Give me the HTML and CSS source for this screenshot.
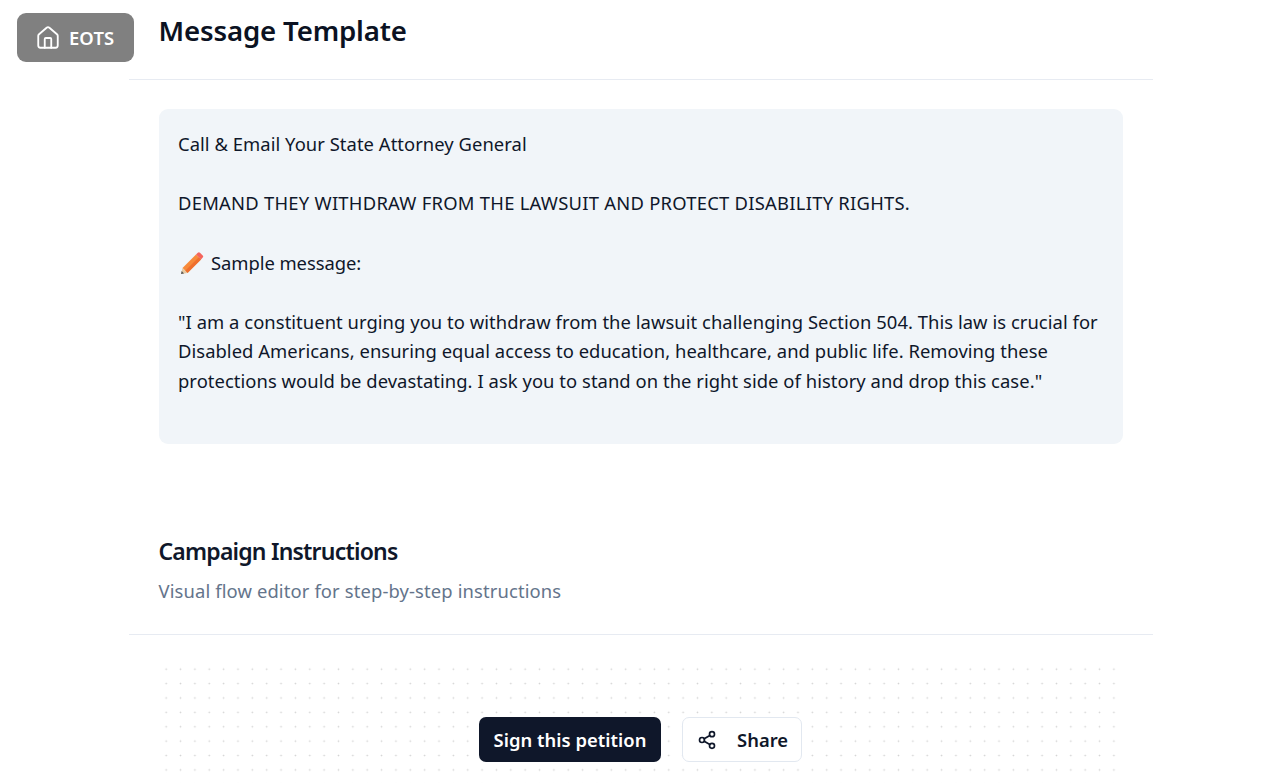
FILE: index.html
```html
<!DOCTYPE html>
<html lang="en">
<head>
<meta charset="utf-8">
<title>Message Template</title>
<link rel="stylesheet" href="styles.css">
</head>
<body>
<a class="home" href="#">
  <svg class="home-icon" viewBox="0 0 24 24" fill="none" stroke="currentColor" stroke-width="1.7" stroke-linecap="round" stroke-linejoin="round"><path d="M15 21v-8a1 1 0 0 0-1-1h-4a1 1 0 0 0-1 1v8"/><path d="M3 10a2 2 0 0 1 .709-1.528l7-5.999a2 2 0 0 1 2.582 0l7 5.999A2 2 0 0 1 21 10v9a2 2 0 0 1-2 2H5a2 2 0 0 1-2-2z"/></svg>
  <span>EOTS</span>
</a>
<main class="page">
  <header class="head">
    <h1 class="title">Message Template</h1>
  </header>
  <section class="body">
    <div class="card">
      <p>Call &amp; Email Your State Attorney General</p>
      <p class="caps">DEMAND THEY WITHDRAW FROM THE LAWSUIT AND PROTECT DISABILITY RIGHTS.</p>
      <p class="sample"><svg class="pencil" viewBox="0 0 24 24"><path d="M2.500 17 16 3.500l5 5L7.500 22z" fill="#f78a3b"/><path d="M7.500 22 21 8.500 18.800 6.300 5 20z" fill="#ef6f2e"/><path d="M16 3.500l1.800-1.800a1.600 1.600 0 0 1 2.200 0l2.700 2.700a1.600 1.600 0 0 1 0 2.200L21 8.500z" fill="#f4645c"/><path d="M2.500 17 1 23l6.500-1z" fill="#e8c9a0"/><path d="M1.700 20 1 23l3-.5z" fill="#555"/></svg>Sample message:</p>
      <p>"I am a constituent urging you to withdraw from the lawsuit challenging Section 504. This law is crucial for Disabled Americans, ensuring equal access to education, healthcare, and public life. Removing these protections would be devastating. I ask you to stand on the right side of history and drop this case."</p>
    </div>
  </section>
  <header class="head2">
    <h2 class="subtitle">Campaign Instructions</h2>
    <p class="desc">Visual flow editor for step-by-step instructions</p>
  </header>
  <section class="canvas">
    <div class="actions">
      <button class="btn primary">Sign this petition</button>
      <button class="btn outline">
        <svg class="share-icon" viewBox="0 0 24 24" fill="none" stroke="currentColor" stroke-width="2" stroke-linecap="round" stroke-linejoin="round"><circle cx="18" cy="5" r="3"/><circle cx="6" cy="12" r="3"/><circle cx="18" cy="19" r="3"/><path d="m8.590 13.510 6.830 3.980"/><path d="m15.410 6.510-6.820 3.980"/></svg>
        <span>Share</span>
      </button>
    </div>
  </section>
</main>
</body>
</html>
```
FILE: styles.css
```css
* { box-sizing: border-box; }
html, body { margin: 0; height: 783px; overflow: hidden; background: #fff; }
body { font-family: "Noto Sans", "Open Sans", sans-serif; color: #0f172a; }
.home {
  position: absolute; left: 17px; top: 13px; width: 117px; height: 49px;
  display: flex; align-items: center; padding-left: 18px; gap: 8px;
  background: #808080; color: #fff; border-radius: 9px;
  font-size: 18.400px; font-weight: 600; text-decoration: none; letter-spacing: 0.1px;
}
.home-icon { width: 26px; height: 26px; flex-shrink: 0; }
.page { width: 1024px; margin-left: 129px; }
.head { height: 80px; padding: 8px 29.500px 0; border-bottom: 1px solid #e7ebf2; }
.title { margin: 0; font-size: 27.600px; line-height: 44px; font-weight: 600; letter-spacing: -0.15px; color: #0b1222; }
.body { padding: 29px 30px 0; }
.card {
  width: 964px; height: 335px; padding: 20px 19px; background: #f1f5f9; border-radius: 9px;
  font-size: 18.400px; line-height: 29.600px; letter-spacing: 0.05px;
}
.card p { margin: 0 0 29.600px; }
.card .caps { letter-spacing: 0.25px; }
.card .sample { display: flex; align-items: center; padding-top: 1px; margin-bottom: 28.600px; letter-spacing: -0.05px; }
.pencil { width: 24px; height: 24px; margin: 0 7px 0 2px; flex-shrink: 0; }
.head2 { padding: 90px 29.500px 0; height: 191px; border-bottom: 1px solid #e7ebf2; }
.subtitle { margin: 0; font-size: 23px; line-height: 34px; font-weight: 600; letter-spacing: -0.8px; }
.desc { margin: 8px 0 0; font-size: 18.400px; line-height: 29px; color: #64748b; letter-spacing: 0.13px; }
.canvas {
  margin: 30px 30px 0; height: 118px; padding-top: 52px;
  display: flex; justify-content: center; align-items: flex-start;
  background-image: radial-gradient(circle, #d2d2d2 0.75px, transparent 1.05px);
  background-size: 14.360px 14.400px; background-position: 0 -3px;
}
.actions { display: flex; gap: 21px; padding-right: 1px; }
.btn {
  height: 45px; font: 600 18.400px "Noto Sans", sans-serif; border-radius: 7px;
  display: flex; align-items: center; letter-spacing: 0.03px;
}
.primary { width: 182px; justify-content: center; background: #0f172a; color: #fff; border: 0; }
.outline { width: 120px; padding: 0 0 0 14px; gap: 20px; background: #fff; color: #0f172a; border: 1px solid #e2e8f0; }
.share-icon { width: 20px; height: 20px; flex-shrink: 0; }
```
